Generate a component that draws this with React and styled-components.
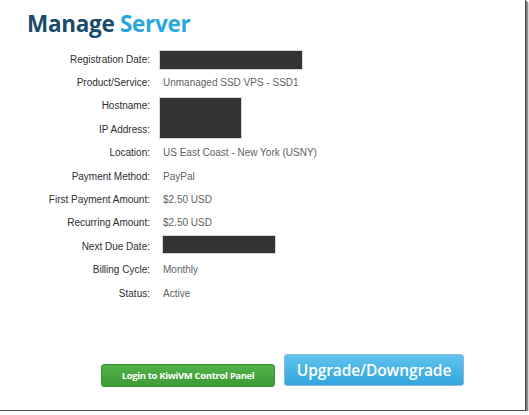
import React from "react";
import styled, { createGlobalStyle } from "styled-components";

const GlobalStyle = createGlobalStyle`
  html, body {
    margin: 0;
    padding: 0;
    background: #ffffff;
  }
  body {
    font-family: "Liberation Sans", Arial, sans-serif;
  }
`;

const Frame = styled.div`
  box-sizing: border-box;
  width: 526px;
  height: 411px;
  background: #ffffff;
  border-right: 1px solid #4a4a4a;
  border-bottom: 1px solid #4a4a4a;
  box-shadow: 1px 1px 0 #7a7a7a, 2px 2px 1px rgba(0, 0, 0, 0.35),
    3px 3px 2px rgba(0, 0, 0, 0.15);
  padding: 10px 0 0 27px;
  display: flex;
  flex-direction: column;
`;

const Title = styled.h1`
  margin: 0;
  font-family: "Open Sans", sans-serif;
  font-weight: 700;
  font-size: 22.5px;
  line-height: 28px;
  letter-spacing: -0.3px;
  color: #1b4a6b;
`;

const Accent = styled.span`
  color: #2aa6dc;
`;

const Details = styled.dl`
  margin: 10px 0 0 -27px;
  display: grid;
  grid-template-columns: 150px 1fr;
  grid-auto-rows: 23.4px;
  column-gap: 13px;
  align-items: center;
  font-size: 10px;
`;

const Label = styled.dt`
  margin: 0;
  text-align: right;
  color: #2e2e2e;
  line-height: 12px;
`;

const Value = styled.dd`
  margin: 0;
  color: #626262;
  line-height: 12px;
  grid-row: ${(p) => p.$row || "auto"};
  display: flex;
  align-items: center;
`;

const Redacted = styled.span`
  display: block;
  width: ${(p) => p.$w}px;
  height: ${(p) => p.$h}px;
  margin-left: ${(p) => p.$shift || 0}px;
  margin-top: ${(p) => p.$lift || 0}px;
  background: #333333;
  box-shadow: 0 0 0 1px #d6d6d6;
`;

const Actions = styled.div`
  margin: 49px 0 0 74px;
  display: flex;
  align-items: flex-end;
  gap: 9px;
`;

const Button = styled.button`
  box-sizing: border-box;
  border-radius: 3px;
  cursor: pointer;
  color: #ffffff;
  font-family: "Open Sans", sans-serif;
  padding: 0;
`;

const GreenButton = styled(Button)`
  width: 174px;
  height: 23px;
  margin-bottom: -1px;
  border: 1px solid #3b8e34;
  background: linear-gradient(#50b248, #3d9b37);
  font-size: 9.5px;
  font-weight: 700;
  letter-spacing: -0.35px;
`;

const BlueButton = styled(Button)`
  width: 180px;
  height: 32px;
  border: 1px solid #8fb6dc;
  background: linear-gradient(#5fc3ec, #33a6dd);
  font-size: 15.5px;
  font-weight: 600;
  letter-spacing: -0.1px;
`;

const rows = [
  ["Registration Date:", <Redacted $w={142} $h={18} $shift={-3} />],
  ["Product/Service:", "Unmanaged SSD VPS - SSD1"],
  ["Hostname:", null],
  ["IP Address:", null],
  ["Location:", "US East Coast - New York (USNY)"],
  ["Payment Method:", "PayPal"],
  ["First Payment Amount:", "$2.50 USD"],
  ["Recurring Amount:", "$2.50 USD"],
  ["Next Due Date:", <Redacted $w={112} $h={17} $lift={-5} />],
  ["Billing Cycle:", "Monthly"],
  ["Status:", "Active"],
];

export default function App() {
  return (
    <>
      <GlobalStyle />
      <Frame>
        <Title>
          Manage <Accent>Server</Accent>
        </Title>
        <Details>
          {rows.map(([label, value], i) => (
            <React.Fragment key={label}>
              <Label style={{ gridRow: i + 1 }}>{label}</Label>
              {i === 2 && (
                <Value $row="3 / span 2">
                  <Redacted $w={81} $h={40} $shift={-3} />
                </Value>
              )}
              {value !== null && <Value $row={i + 1}>{value}</Value>}
            </React.Fragment>
          ))}
        </Details>
        <Actions>
          <GreenButton>Login to KiwiVM Control Panel</GreenButton>
          <BlueButton>Upgrade/Downgrade</BlueButton>
        </Actions>
      </Frame>
    </>
  );
}
